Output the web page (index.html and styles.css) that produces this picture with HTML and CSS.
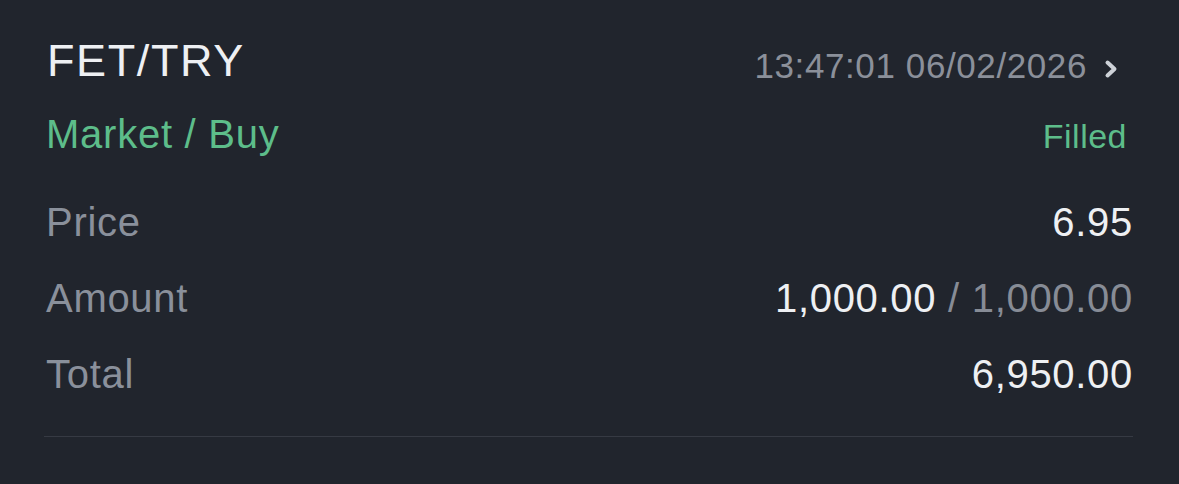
FILE: index.html
```html
<!DOCTYPE html>
<html lang="en">
<head>
<meta charset="utf-8">
<title>Order FET/TRY</title>
<link rel="stylesheet" href="styles.css">
</head>
<body>
<div class="order">
  <div class="head">
    <div class="pair">FET/TRY</div>
    <div class="time">
      <span class="stamp">13:47:01 06/02/2026</span>
      <svg class="chev" width="16" height="20" viewBox="0 0 16 20" aria-hidden="true">
        <polyline points="4.5,3.5 11.5,10 4.5,16.5" fill="none" stroke="#cdd1d7" stroke-width="4" stroke-linecap="round" stroke-linejoin="round"/>
      </svg>
    </div>
  </div>
  <div class="sub">
    <div class="type">Market / Buy</div>
    <div class="status">Filled</div>
  </div>
  <div class="rows">
    <div class="row"><span class="label">Price</span><span class="val">6.95</span></div>
    <div class="row"><span class="label">Amount</span><span class="val">1,000.00 <span class="muted">/ 1,000.00</span></span></div>
    <div class="row"><span class="label">Total</span><span class="val">6,950.00</span></div>
  </div>
  <div class="divider"></div>
</div>
</body>
</html>
```

FILE: styles.css
```css
html, body {
  margin: 0;
  padding: 0;
  background: #21252d;
}
body {
  width: 1179px;
  height: 484px;
  overflow: hidden;
  font-family: "Liberation Sans", Arial, sans-serif;
}
.order {
  padding: 36px 47px 0 46px;
}
.head {
  display: flex;
  justify-content: space-between;
  align-items: baseline;
  height: 50px;
  line-height: 50px;
}
.pair {
  font-size: 45px;
  letter-spacing: 1.6px;
  color: #eef0f3;
  margin-left: 1px;
}
.time {
  display: flex;
  align-items: baseline;
  margin-right: 13px;
}
.stamp {
  font-size: 35px;
  letter-spacing: 0.6px;
  color: #8b909a;
  position: relative;
  top: 2px;
}
.chev {
  margin-left: 16px;
  align-self: center;
  position: relative;
  top: 5px;
}
.sub {
  display: flex;
  justify-content: space-between;
  align-items: baseline;
  margin-top: 23px;
  height: 50px;
  line-height: 50px;
}
.type {
  font-size: 40px;
  letter-spacing: 0.75px;
  color: #5dbd8a;
}
.status {
  font-size: 34px;
  letter-spacing: 0.5px;
  color: #5dbd8a;
  margin-right: 5px;
}
.rows {
  margin-top: 25px;
}
.row {
  display: flex;
  justify-content: space-between;
  align-items: baseline;
  height: 76px;
  line-height: 76px;
  font-size: 40px;
  letter-spacing: 0.7px;
}
.label {
  color: #8a909b;
}
.val {
  color: #eef0f3;
  margin-right: -1px;
}
.muted {
  color: #878c96;
}
.divider {
  margin-top: 24px;
  height: 1px;
  background: #363a43;
  margin-left: -2px;
  margin-right: -1px;
}
```
